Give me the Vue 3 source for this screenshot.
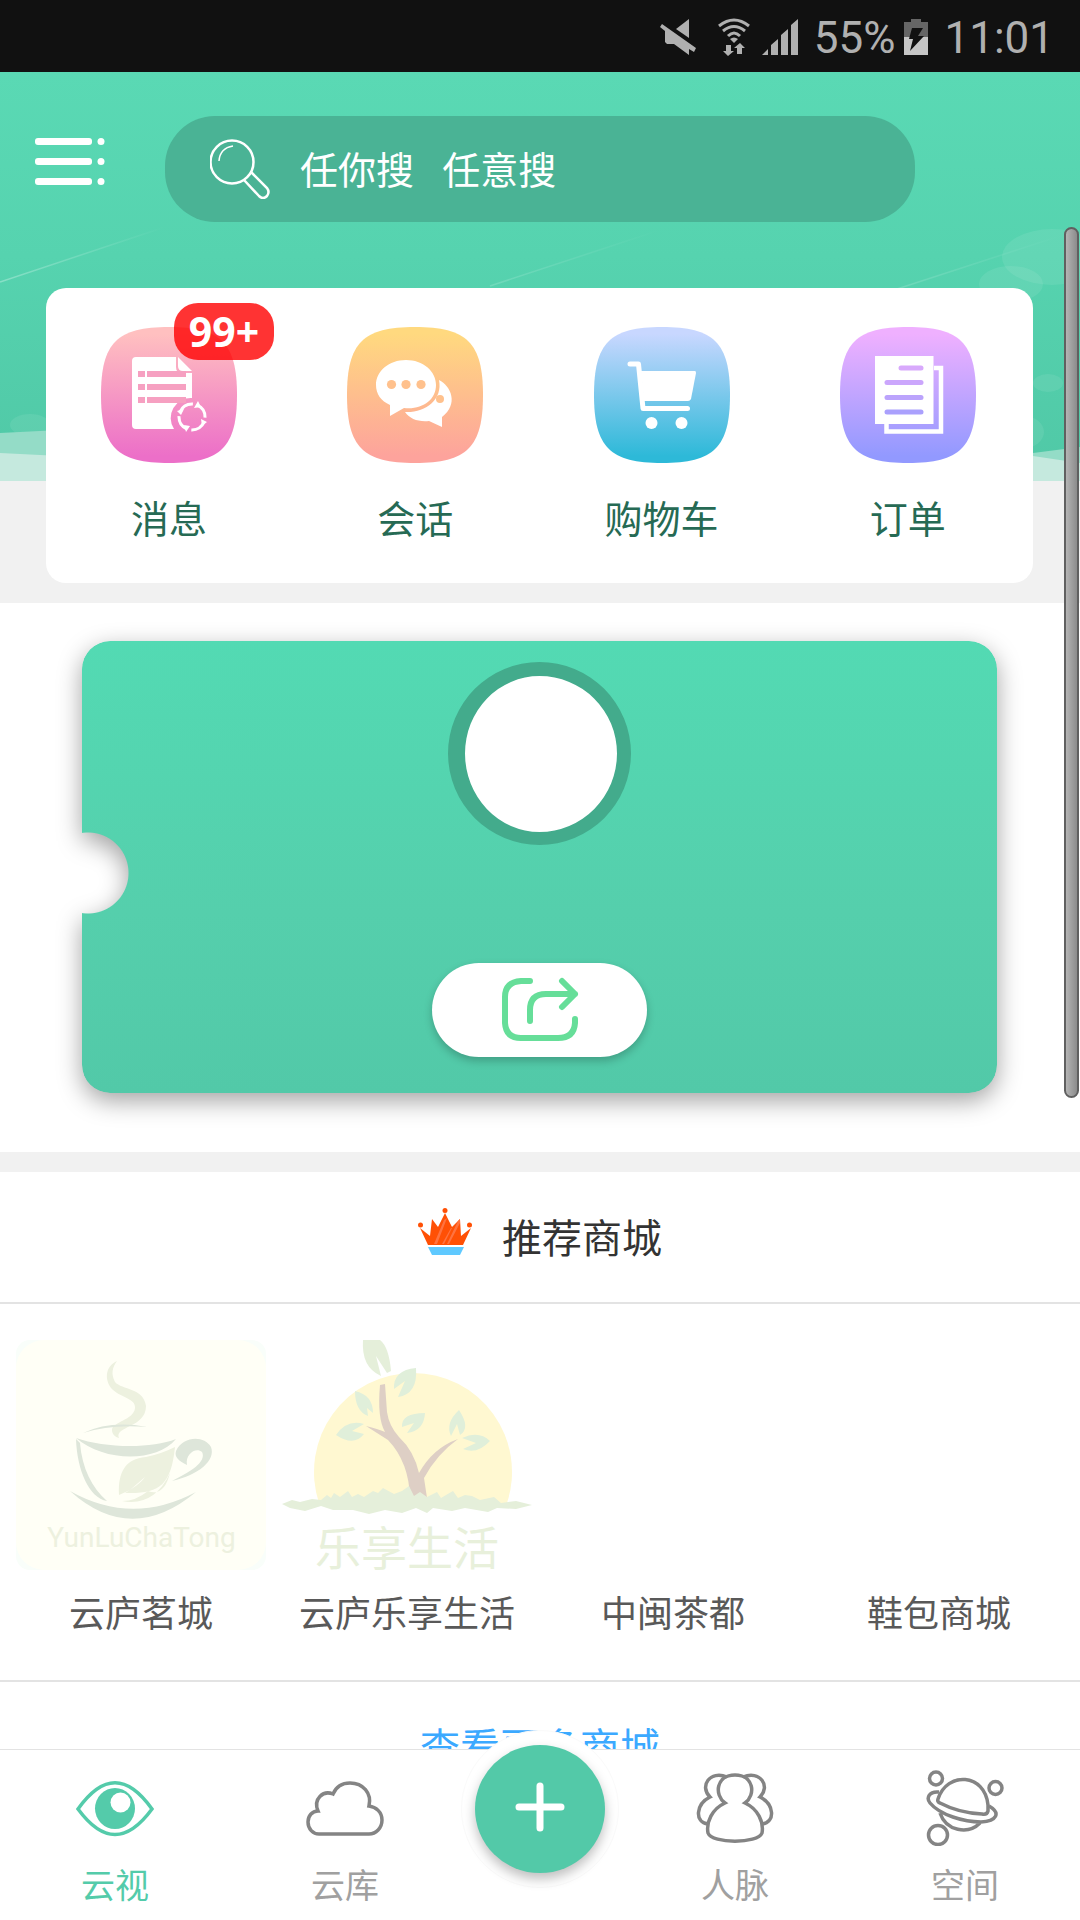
<script setup>
import { ref } from 'vue'

const keyword = ref('')
const active = ref('eye')

const shortcuts = [
  { id: 'message', label: '消息', from: '#ffc0c0', to: '#ec6fc8', badge: '99+' },
  { id: 'chat', label: '会话', from: '#ffd97f', to: '#fda39c' },
  { id: 'cart', label: '购物车', from: '#c8d7ff', to: '#2db9d8' },
  { id: 'order', label: '订单', from: '#efb0ff', to: '#9299ff' }
]

const malls = [
  { id: 'tea', label: '云庐茗城' },
  { id: 'tree', label: '云庐乐享生活' },
  { id: 'min', label: '中闽茶都' },
  { id: 'shoes', label: '鞋包商城' }
]

const tabsLeft = [
  { id: 'eye', label: '云视' },
  { id: 'cloud', label: '云库' }
]
const tabsRight = [
  { id: 'people', label: '人脉' },
  { id: 'space', label: '空间' }
]
</script>

<template>
  <div class="app">
    <div class="status">
      <svg width="36" height="36" viewBox="0 0 36 36" fill="#b0b0b0">
        <path d="M29 0V19L16 10Z" />
        <path d="M2 5L36 29L34 33L29 30V36L14 25H7L5 23V12L0 8Z" />
      </svg>
      <svg class="wifi" width="32" height="38" viewBox="0 0 32 38" fill="none" stroke="#b0b0b0" stroke-width="3">
        <path d="M1 8Q16 -4 31 8M5 13Q16 4 27 13M10 18Q16 12 22 18" />
        <path d="M16 25L12 21Q16 18 20 21ZM8 27H13V33H16L10 38L5 33H8ZM19 36H24V30H27L22 25L16 30H19Z" fill="#b0b0b0" stroke="none" />
      </svg>
      <svg class="signal" width="36" height="36" viewBox="0 0 36 36" fill="#b0b0b0">
        <path d="M0 36L6 30V36ZM9 36V26L16 20V36ZM19 36V16L26 10V36ZM29 36V6L36 0V36Z" />
      </svg>
      <span class="level">55%</span>
      <svg width="24" height="36" viewBox="0 0 24 36">
        <path d="M0 3H7V0H17V3H24V18H0Z" fill="#666" />
        <path d="M0 18H24V36H0Z" fill="#c6c6c6" />
        <path d="M8 9H19L14 17H20L6 32L9 20H5Z" fill="#111" />
      </svg>
      <time>11:01</time>
    </div>

    <main>
      <header>
        <svg class="scene" viewBox="0 0 1080 409" preserveAspectRatio="none" aria-hidden="true">
          <defs>
            <linearGradient id="sky" x1="0" y1="0" x2="0" y2="1">
              <stop offset="0" stop-color="#5ad9b4" />
              <stop offset=".45" stop-color="#56d3af" />
              <stop offset="1" stop-color="#50c8a6" />
            </linearGradient>
            <linearGradient id="ray" x1="0" y1="0" x2="1" y2="0">
              <stop offset="0" stop-color="#fff" stop-opacity=".3" />
              <stop offset="1" stop-color="#fff" stop-opacity="0" />
            </linearGradient>
            <linearGradient id="ray-soft" x1="0" y1="0" x2="1" y2="0">
              <stop offset="0" stop-color="#fff" stop-opacity=".16" />
              <stop offset="1" stop-color="#fff" stop-opacity="0" />
            </linearGradient>
          </defs>
          <rect width="1080" height="409" fill="url(#sky)" />
          <g fill="none" stroke-width="1.5">
            <path d="M0 210L165 155" stroke="url(#ray)" />
            <path d="M490 214L660 158" stroke="url(#ray-soft)" />
            <path d="M897 217L1063 163" stroke="url(#ray-soft)" />
          </g>
          <g fill="#fff" fill-opacity=".08">
            <ellipse cx="1052" cy="185" rx="50" ry="28" />
            <ellipse cx="1011" cy="212" rx="32" ry="18" />
            <ellipse cx="1048" cy="311" rx="15" ry="9" />
            <ellipse cx="1024" cy="360" rx="20" ry="16" />
            <ellipse cx="30" cy="353" rx="20" ry="11" />
          </g>
          <path d="M0 361L60 358L540 390L1033 381L1080 375V409H0Z" fill="#94dcc7" />
          <path d="M0 381L60 384H1033L1080 391V409H0Z" fill="#c5e9de" />
        </svg>

        <div class="topbar">
          <button class="menu" type="button" aria-label="菜单">
            <svg width="70" height="48" viewBox="0 0 70 48" fill="#fff">
              <rect width="57" height="7" rx="3" /><rect y="20" width="57" height="7" rx="3" /><rect y="40" width="57" height="7" rx="3" />
              <circle cx="66" cy="3.5" r="3.5" /><circle cx="66" cy="23.5" r="3.5" /><circle cx="66" cy="43.5" r="3.5" />
            </svg>
          </button>
          <label class="search">
            <svg width="60" height="60" viewBox="0 0 60 60" fill="none" stroke="#fff" stroke-width="2.5">
              <circle cx="22" cy="23" r="21.5" />
              <path d="M34 41L49 57Q53 61 57 57Q60 53 57 49L41 33" />
              <path d="M9 22Q10 9 23 7" stroke-width="1.5" />
            </svg>
            <input v-model="keyword" type="search" aria-label="搜索" placeholder="任你搜&nbsp;&nbsp;&nbsp;任意搜">
          </label>
        </div>

        <nav class="card" aria-label="快捷入口">
          <a v-for="s in shortcuts" :key="s.id" class="shortcut" href="#">
            <span class="tile">
              <svg width="136" height="136" viewBox="0 0 136 136" fill="#fff">
                <defs>
                  <linearGradient :id="'g-' + s.id" x1="0" y1="0" x2="0" y2="1">
                    <stop offset=".05" :stop-color="s.from" />
                    <stop offset=".95" :stop-color="s.to" />
                  </linearGradient>
                </defs>
                <path d="M68 0C120 0 136 16 136 68S120 136 68 136S0 120 0 68S16 0 68 0Z" :fill="`url(#g-${s.id})`" />
                <template v-if="s.id === 'message'">
                  <path d="M35 30H75V40Q75 46 81 46H91V71A20 20 0 0 0 73 102H35Q31 102 31 98V34Q31 30 35 30ZM77 30L91 44H82Q77 44 77 39Z" />
                  <path d="M37 44H44V50H37ZM46 44H85V50H46ZM37 57H44V63H37ZM46 57H85V63H46ZM37 70H44V76H37ZM46 70H85V76H46Z" fill="#f6a0c1" />
                  <circle cx="91" cy="90" r="13" fill="none" stroke="#fff" stroke-width="3" stroke-dasharray="16 4.4" stroke-dashoffset="-5" />
                  <path d="M97 74L100 80L93 81ZM106 95L101 99L100 92ZM85 105L83 98L89 99ZM76 84L83 82L80 88Z" />
                </template>
                <template v-else-if="s.id === 'chat'">
                  <path d="M59 33C76 33 89 44 89 58C89 73 75 83 57 81L43 89V78C34 74 29 67 29 58C29 44 42 33 59 33Z" />
                  <path d="M92 53C104 59 112 77 95 90V100L82 94C71 95 63 92 58 85C78 86 96 73 92 53Z" />
                  <g fill="#ffc18d"><circle cx="44.5" cy="57.5" r="4.6" /><circle cx="59" cy="57.5" r="4.6" /><circle cx="74" cy="57.5" r="4.6" /><circle cx="93" cy="72" r="4" /></g>
                </template>
                <template v-else-if="s.id === 'cart'">
                  <path d="M36 37H44.5L49 81.5H93.5" fill="none" stroke="#fff" stroke-width="5" stroke-linecap="round" stroke-linejoin="round" />
                  <path d="M47 44H101Q102 44 102 46L97 72Q96 74 94 74H50Z" />
                  <circle cx="57.5" cy="96" r="6" /><circle cx="87.5" cy="96" r="6" />
                </template>
                <template v-else>
                  <path d="M35 29H93.5V97H35Z" />
                  <path d="M94 41H101V104.5H46.5V97" fill="none" stroke="#fff" stroke-width="4.5" />
                  <g fill="none" stroke-width="5" stroke-linecap="round">
                    <path d="M61 41H81" stroke="#d8a9fc" /><path d="M47 55.5H81" stroke="#cba6fc" />
                    <path d="M47 70.5H81" stroke="#bba3fc" /><path d="M47 85H81" stroke="#aaa0fd" />
                  </g>
                </template>
              </svg>
              <b v-if="s.badge" class="badge">{{ s.badge }}</b>
            </span>
            <span class="name">{{ s.label }}</span>
          </a>
        </nav>
      </header>

      <section class="ticket-area">
        <div class="ticket-shadow">
          <div class="ticket">
            <div class="avatar"></div>
            <button class="share" type="button" aria-label="分享">
              <svg width="78" height="66" viewBox="0 0 78 66" fill="none" stroke="#66de99" stroke-width="6" stroke-linecap="round" stroke-linejoin="round">
                <path d="M29 4H20Q4 5 4 20V46Q5 61 20 61H57Q73 61 74 46V42" />
                <path d="M29 44V33Q29 17 45 17H74M61 4L74 17L61 30" />
              </svg>
            </button>
          </div>
        </div>
      </section>

      <section class="mall">
        <h2>
          <svg width="54" height="48" viewBox="0 0 54 48">
            <path d="M2 20L12 28L14 11L20 19L27 5L34 19L42 11L43 28L53 20L45 37H10Z" fill="#ff5005" />
            <circle cx="27" cy="2.5" r="2.5" fill="#ff5005" /><circle cx="2.5" cy="17" r="2.5" fill="#ff5005" /><circle cx="51.5" cy="17" r="2.5" fill="#ff5005" />
            <path d="M16 36L26 12L29 10L19 36ZM24 36L33 20L34 20L26 36ZM29 36L40 13L42 11L42 15L31 36Z" fill="#ff7340" />
            <path d="M10 39H46L42 47H14Z" fill="#5fc9ff" />
          </svg>
          <span>推荐商城</span>
        </h2>
        <div class="malls">
          <a v-for="m in malls" :key="m.id" href="#">
            <svg class="logo" viewBox="0 0 250 230" aria-hidden="true">
              <template v-if="m.id === 'tea'">
                <rect width="250" height="230" rx="14" fill="#f9fefa" />
                <rect width="250" height="230" rx="28" fill="#fffff6" />
                <path d="M101 21C90 26 88 38 95 48C104 58 120 58 119 68C118 80 96 82 96 90C96 94 99 97 103 98C98 86 130 88 130 66C128 48 106 50 99 42C95 34 96 28 101 21Z" fill="#edf1df" />
                <g fill="#dee6da">
                  <path d="M60 98C88 108 135 109 160 99C140 123 88 122 60 98Z" />
                  <path d="M60 99C61 130 73 158 91 161C76 148 66 128 64 103Z" />
                  <path d="M67 93Q95 80 131 87Q95 84 67 93Z" />
                  <path d="M54 151Q115 206 180 152Q116 186 54 151Z" />
                  <path d="M160 111C167 96 188 95 195 107C200 120 183 135 156 141C174 132 191 122 186 112C180 107 169 114 171 125C163 121 158 117 160 111Z" />
                </g>
                <path d="M159 107C155 146 143 154 109 153C117 148 124 144 129 137L114 150L103 155C102 132 109 119 130 117Q145 114 159 107Z" fill="#edf1df" />
                <path d="M106 161Q138 167 154 133Q148 157 132 151Q120 161 106 161Z" fill="#edf1df" />
                <text class="brand" x="125.5" y="207" text-anchor="middle" font-size="28" fill="#edf1df">YunLuChaTong</text>
              </template>
              <template v-else-if="m.id === 'tree'">
                <path d="M37 163A99 99 0 1 1 225 163Z" fill="#fff8d1" />
                <path d="M98 45L103 44L105 72Q107 86 117 97Q132 111 137 133Q151 108 176 99Q155 114 142 138L145 158H128Q127 122 106 100L84 86Q96 89 103 92Q95 78 98 45Z" fill="#decfc5" />
                <path d="M81 0H98Q107 7 109 31L105 33L94 16L99 36Q79 27 81 0Z" fill="#e5efda" />
                <g fill="#e0efda">
                  <path d="M134 28Q111 30 112 49L123 41L116 57Q136 54 134 28Z" />
                  <path d="M73 51Q91 55 91 73L85 68L86 76Q73 71 73 51Z" />
                  <path d="M54 95Q65 79 82 84L70 91L82 94Q72 107 54 95Z" />
                  <path d="M143 73Q119 73 120 87L132 83L125 93Q142 91 143 73Z" />
                  <path d="M177 70Q163 83 169 96L175 84L178 95Q189 88 177 70Z" />
                  <path d="M180 98Q197 90 208 101Q195 115 181 109L194 103Z" />
                </g>
                <path d="M0 164L10 160L18 162L30 159L39 160L45 155L49 158L52 153L58 157L66 151L70 157L76 154L82 157L91 151L96 153L101 148L112 154L120 151L127 146L132 156L138 152L145 157L155 152L159 158L164 155L171 151L176 158L183 155L190 156L198 160L212 157L219 163L234 161L250 165L234 169L215 168L206 172L183 168L170 171L151 168L145 173L134 168L120 173L103 170L87 174L71 170L51 170L39 166L23 171L8 168Z" fill="#e5efda" />
                <text x="125" y="225" text-anchor="middle" font-size="46" fill="#e8f0db">乐享生活</text>
              </template>
            </svg>
            <span>{{ m.label }}</span>
          </a>
        </div>
        <a class="more" href="#">查看更多商城</a>
      </section>
    </main>

    <div class="scrollbar" aria-hidden="true"></div>

    <nav class="tabs" aria-label="主导航">
      <button v-for="t in tabsLeft" :key="t.id" type="button" :class="['tab', { on: active === t.id }]" @click="active = t.id">
        <svg v-if="t.id === 'eye'" width="78" height="76" viewBox="0 -11 78 76" fill="none" stroke="currentColor" stroke-width="3.5">
          <path d="M2 28C27 -7 51 -7 76 28C51 62 27 62 2 28Z" />
          <ellipse cx="39" cy="27.5" rx="20" ry="20.5" fill="currentColor" stroke="none" />
          <circle cx="44.5" cy="21.5" r="10" fill="#fff" stroke="none" />
        </svg>
        <svg v-else width="78" height="76" viewBox="0 -11 78 76" fill="none" stroke="#848484" stroke-width="3.5">
          <path d="M13 53H63C70 53 76 47 76 39C76 31 70 26 63 25C66 12 57 2 44 2C36 2 30 6 27 13C17 9 7 18 12 30C6 30 2 35 2 41C2 48 7 53 13 53Z" />
        </svg>
        <span>{{ t.label }}</span>
      </button>
      <div class="middle">
        <div class="ring">
          <button class="add" type="button" aria-label="新增">
            <svg width="50" height="50" viewBox="0 0 50 50" stroke="#fff" stroke-width="7" stroke-linecap="round">
              <path d="M25 4V46M4 25H46" />
            </svg>
          </button>
        </div>
      </div>
      <button v-for="t in tabsRight" :key="t.id" type="button" :class="['tab', { on: active === t.id }]" @click="active = t.id">
        <svg v-if="t.id === 'people'" width="78" height="76" viewBox="0 -3 78 76" fill="none" stroke="#848484" stroke-width="3.5">
          <path d="M29 30C18 22 20 2 39 2S60 22 49 30C62 36 68 49 66 60C62 71 16 71 12 60C10 49 16 36 29 30Z" />
          <path d="M31 4C14 -3 3 13 14 24C0 31 -2 49 12 51M47 4C64 -3 75 13 64 24C78 31 80 49 66 51" />
        </svg>
        <svg v-else width="78" height="76" viewBox="0 0 78 76" fill="none" stroke="#848484" stroke-width="3.5">
          <circle cx="10" cy="8.5" r="6.5" /><circle cx="69.5" cy="18" r="6.5" /><circle cx="12" cy="65" r="9.5" />
          <path d="M12 29C21 1 59 3 62 35V41Q61 45 56 44Q33 43 14 33Q11 32 12 29Z" />
          <path d="M13 22C3 21 0 28 4 33C14 45 38 52 55 52C71 51 75 43 63 36M14 43C20 61 42 65 54 53" />
        </svg>
        <span>{{ t.label }}</span>
      </button>
    </nav>
  </div>
</template>

<style>
body { margin: 0; background: #fff; }
</style>

<style scoped>
* { box-sizing: border-box; }

.app {
  position: relative;
  display: flex;
  flex-direction: column;
  height: 100vh;
  overflow: hidden;
  background: #fff;
  font-family: Roboto, "Noto Sans CJK SC", sans-serif;
}
button { border: 0; padding: 0; background: none; font: inherit; }
a { color: inherit; text-decoration: none; }
svg { display: block; flex: none; }

.status {
  display: flex;
  flex: none;
  align-items: center;
  justify-content: flex-end;
  height: 72px;
  padding: 2px 26px 0 0;
  background: #111;
  color: #b0b0b0;
  font-size: 44px;
  line-height: 52px;
}
.wifi { margin-left: 22px; }
.signal { margin-left: 12px; }
.level { margin: 0 9px 0 16px; }
.level, .status time { padding-top: 2px; }
.status time { margin-left: 16px; }

main { flex: 1; min-height: 0; overflow: hidden; }

header { position: relative; padding: 44px 47px 20px 46px; background: #f1f1f1; }
.scene { position: absolute; top: 0; left: 0; width: 100%; height: 409px; }
.topbar { position: relative; display: flex; align-items: center; margin: 0 118px 0 -11px; }
.menu { width: 130px; height: 62px; flex: none; padding-bottom: 14px; }
.search {
  display: flex;
  flex: 1;
  align-items: center;
  gap: 30px;
  height: 106px;
  padding: 0 45px;
  border-radius: 50px;
  background: #4ab395;
}
.search input {
  flex: 1;
  min-width: 0;
  padding: 4px 0 0;
  border: 0;
  outline: 0;
  background: none;
  color: #fff;
  font: inherit;
  font-size: 38px;
  line-height: 54px;
}
.search input::placeholder { color: #fff; opacity: 1; }

.card {
  position: relative;
  display: grid;
  grid-template-columns: repeat(4, 1fr);
  margin-top: 66px;
  padding: 39px 2px 43px 0;
  border-radius: 20px;
  background: #fff;
}
.shortcut { display: flex; flex-direction: column; align-items: center; gap: 37px; }
.tile { position: relative; }
.badge {
  position: absolute;
  top: -24px;
  right: -37px;
  padding: 0 15px;
  border-radius: 24px;
  background: rgba(255, 0, 0, .8);
  color: #fff;
  font-family: "Noto Sans", sans-serif;
  font-size: 41px;
  line-height: 57px;
}
.name { color: #266a54; font-size: 38px; line-height: 40px; }

.ticket-area { padding: 38px 83px 60px 82px; }
.ticket-shadow { filter: drop-shadow(0 8px 12px rgba(0, 0, 0, .36)); }
.ticket {
  display: flex;
  flex-direction: column;
  align-items: center;
  gap: 118px;
  padding: 21px 0 36px;
  border-radius: 28px;
  background: linear-gradient(#53dab3, #55cfac 60%, #52c9a8);
  -webkit-mask: radial-gradient(circle at 6px 232px, transparent 40px, #000 41px);
  mask: radial-gradient(circle at 6px 232px, transparent 40px, #000 41px);
}
.avatar {
  width: 183px;
  height: 183px;
  border: solid #43ab8c;
  border-width: 14px 14px 13px 17px;
  border-radius: 50%;
  background: #fff;
}
.share {
  display: flex;
  align-items: center;
  justify-content: center;
  width: 215px;
  height: 94px;
  border-radius: 48px;
  background: #fff;
  box-shadow: 0 4px 8px rgba(0, 0, 0, .22);
}

.mall { border-top: 20px solid #f1f1f1; margin-top: -1px; }
h2 {
  display: flex;
  align-items: center;
  justify-content: center;
  gap: 30px;
  height: 132px;
  margin: 0;
  border-bottom: 2px solid #e3e3e3;
  color: #333;
  font-size: 40px;
  font-weight: 400;
}
h2 svg { margin-bottom: 10px; }
h2 span { margin-bottom: 2px; }
.malls {
  display: grid;
  grid-template-columns: repeat(4, 1fr);
  padding: 36px 8px 45px;
  border-bottom: 2px solid #e3e3e3;
}
.malls a {
  display: flex;
  flex-direction: column;
  gap: 25px;
  padding: 0 8px;
  color: #595959;
  font-size: 36px;
  line-height: 40px;
  text-align: center;
  white-space: nowrap;
}
.logo { width: 100%; overflow: visible; font-family: "Noto Sans", "Noto Sans CJK SC", sans-serif; }
.brand { font-family: Roboto, sans-serif; }
.more { display: block; color: #3ba9ff; font-size: 40px; line-height: 134px; text-align: center; }

.scrollbar {
  position: absolute;
  top: 227px;
  right: 1px;
  width: 15px;
  height: 871px;
  border: 2px solid #606060;
  border-radius: 8px;
  background: linear-gradient(90deg, #b4b4b4, #8c8c8c);
}

.tabs {
  position: relative;
  display: grid;
  flex: none;
  grid-template-columns: 1fr 1fr 160px 1fr 1fr;
  border-top: 1px solid #e3e3e3;
  background: #fff;
}
.tab {
  display: flex;
  flex-direction: column;
  align-items: center;
  gap: 20px;
  padding: 20px 0 14px;
  color: #a0a0a0;
  font-size: 34px;
  line-height: 40px;
}
.tab.on { color: #54cbaa; }
.middle { position: relative; }
.ring {
  position: absolute;
  top: -20px;
  left: 1px;
  display: flex;
  align-items: center;
  justify-content: center;
  width: 158px;
  height: 158px;
  border: 1px solid #fafafa;
  border-radius: 50%;
  background: #fff;
}
.add {
  display: flex;
  align-items: center;
  justify-content: center;
  width: 130px;
  height: 128px;
  padding-bottom: 4px;
  border-radius: 50%;
  background: #53c9a8;
  box-shadow: 0 6px 12px rgba(0, 0, 0, .25);
}
</style>
